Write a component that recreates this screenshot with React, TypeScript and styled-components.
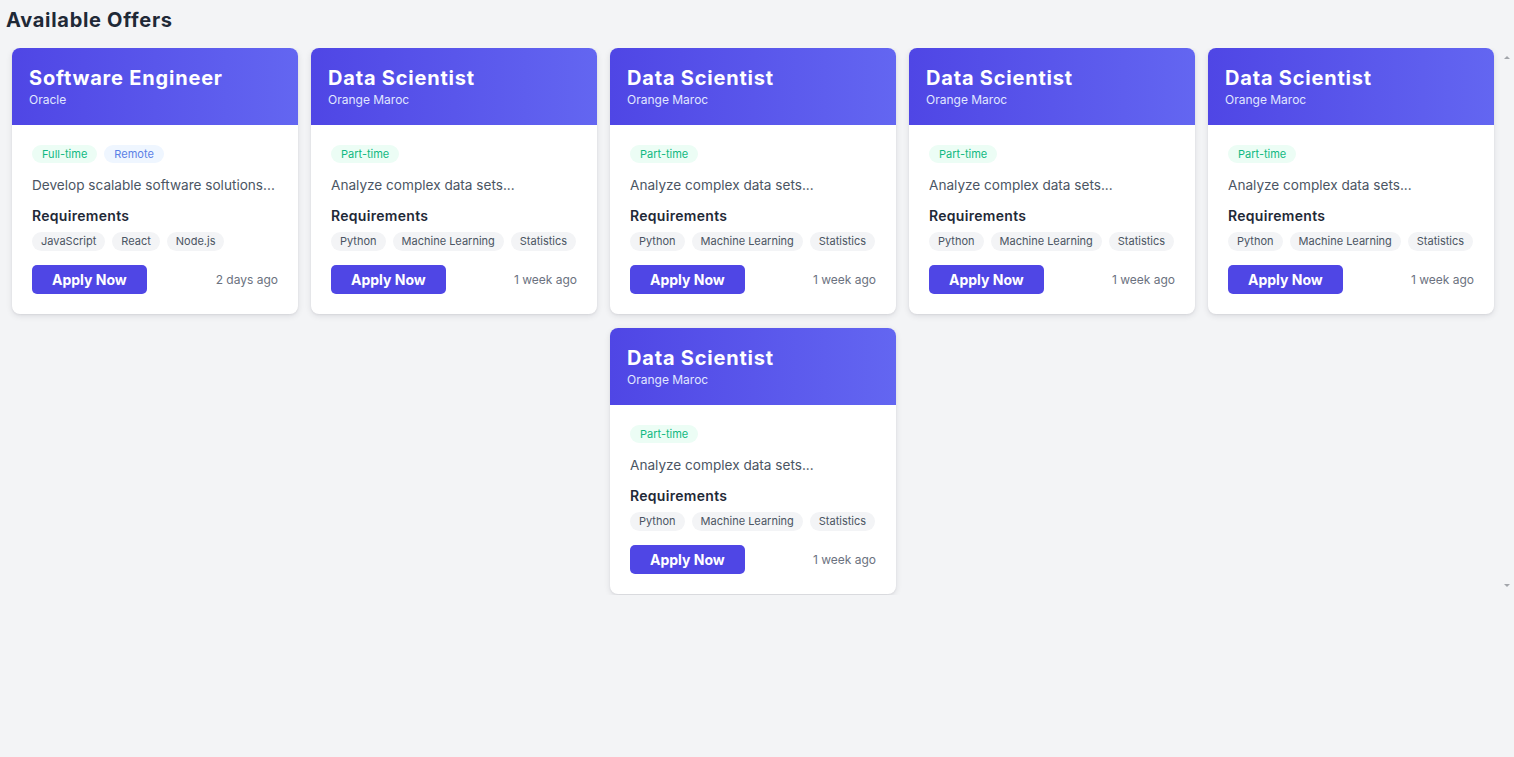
import React from 'react';
import styled, { createGlobalStyle } from 'styled-components';

const GlobalStyle = createGlobalStyle`
  html, body {
    margin: 0;
    padding: 0;
    background: #f3f4f6;
    font-family: 'Inter', 'Noto Sans', sans-serif;
  }
  * {
    box-sizing: border-box;
  }
`;

type Offer = {
  id: number;
  title: string;
  company: string;
  types: { label: string; tone: 'green' | 'blue' }[];
  description: string;
  skills: string[];
  posted: string;
};

const offers: Offer[] = [
  {
    id: 1,
    title: 'Software Engineer',
    company: 'Oracle',
    types: [
      { label: 'Full-time', tone: 'green' },
      { label: 'Remote', tone: 'blue' },
    ],
    description: 'Develop scalable software solutions...',
    skills: ['JavaScript', 'React', 'Node.js'],
    posted: '2 days ago',
  },
  ...[2, 3, 4, 5, 6].map((id) => ({
    id,
    title: 'Data Scientist',
    company: 'Orange Maroc',
    types: [{ label: 'Part-time', tone: 'green' as const }],
    description: 'Analyze complex data sets...',
    skills: ['Python', 'Machine Learning', 'Statistics'],
    posted: '1 week ago',
  })),
];

const Page = styled.div`
  padding: 6px 0 0 6px;
  height: 757px;
`;

const PageTitle = styled.h1`
  margin: 0 0 14px;
  font-size: 20px;
  line-height: 28px;
  font-weight: 700;
  color: #1f2937;
  letter-spacing: 0.7px;
`;

const Scroller = styled.div`
  position: relative;
  height: 547px;
  overflow-y: auto;
  padding-right: 14px;
`;

const ScrollArrow = styled.span<{ $down?: boolean }>`
  position: absolute;
  right: 4px;
  ${({ $down }) => ($down ? 'bottom: 8px;' : 'top: 8px;')}
  width: 0;
  height: 0;
  border-left: 3px solid transparent;
  border-right: 3px solid transparent;
  ${({ $down }) => ($down ? 'border-top: 3px solid #a3a6ab;' : 'border-bottom: 3px solid #a3a6ab;')}
`;

const Grid = styled.div`
  display: flex;
  flex-wrap: wrap;
  justify-content: center;
  gap: 14px 13px;
  padding-bottom: 12px;
`;

const Card = styled.div`
  width: 286px;
  background: #ffffff;
  border-radius: 8px;
  overflow: hidden;
  box-shadow: 0 2px 6px rgba(17, 24, 39, 0.1), 0 1px 2px rgba(17, 24, 39, 0.06);
`;

const CardHeader = styled.div`
  height: 77px;
  padding: 16px 17px;
  background: linear-gradient(90deg, #4f46e5 0%, #6366f1 100%);
  color: #ffffff;
`;

const JobTitle = styled.h2`
  margin: 0;
  font-size: 20px;
  line-height: 28px;
  font-weight: 700;
  letter-spacing: 0.8px;
  white-space: nowrap;
`;

const Company = styled.div`
  font-size: 12px;
  line-height: 16px;
  color: #e0e7ff;
`;

const CardBody = styled.div`
  padding: 20px;
`;

const TagRow = styled.div`
  display: flex;
  gap: 7px;
  margin-bottom: 12px;
`;

const Tag = styled.span<{ $tone: 'green' | 'blue' }>`
  display: inline-block;
  padding: 2px 10px;
  border-radius: 999px;
  font-size: 11px;
  line-height: 14px;
  white-space: nowrap;
  background: ${({ $tone }) => ($tone === 'green' ? '#ecfdf5' : '#eff6ff')};
  color: ${({ $tone }) => ($tone === 'green' ? '#10b981' : '#5b7fe6')};
`;

const Description = styled.p`
  margin: 0 0 11px;
  font-size: 13.6px;
  line-height: 20px;
  color: #4b5563;
  white-space: nowrap;
  overflow: hidden;
`;

const SectionLabel = styled.h3`
  margin: 0 0 6px;
  font-size: 14px;
  line-height: 20px;
  font-weight: 600;
  color: #1f2937;
  letter-spacing: 0.3px;
`;

const SkillRow = styled.div`
  display: flex;
  gap: 7px;
  margin-bottom: 14px;
`;

const Skill = styled.span`
  display: inline-block;
  padding: 3px 9px;
  border-radius: 999px;
  font-size: 11px;
  line-height: 13px;
  white-space: nowrap;
  background: #f3f4f6;
  color: #4b5563;
`;

const Footer = styled.div`
  display: flex;
  align-items: center;
  justify-content: space-between;
`;

const ApplyButton = styled.button`
  height: 29px;
  padding: 0 20px;
  border: none;
  border-radius: 5px;
  background: #4f46e5;
  color: #ffffff;
  font-family: inherit;
  font-size: 14px;
  font-weight: 700;
  cursor: pointer;
`;

const Posted = styled.span`
  font-size: 12px;
  color: #6b7280;
`;

const OfferCard: React.FC<{ offer: Offer }> = ({ offer }) => (
  <Card>
    <CardHeader>
      <JobTitle>{offer.title}</JobTitle>
      <Company>{offer.company}</Company>
    </CardHeader>
    <CardBody>
      <TagRow>
        {offer.types.map((t) => (
          <Tag key={t.label} $tone={t.tone}>
            {t.label}
          </Tag>
        ))}
      </TagRow>
      <Description>{offer.description}</Description>
      <SectionLabel>Requirements</SectionLabel>
      <SkillRow>
        {offer.skills.map((s) => (
          <Skill key={s}>{s}</Skill>
        ))}
      </SkillRow>
      <Footer>
        <ApplyButton>Apply Now</ApplyButton>
        <Posted>{offer.posted}</Posted>
      </Footer>
    </CardBody>
  </Card>
);

const App: React.FC = () => (
  <>
    <GlobalStyle />
    <Page>
      <PageTitle>Available Offers</PageTitle>
      <Scroller>
        <ScrollArrow />
        <ScrollArrow $down />
        <Grid>
          {offers.map((o) => (
            <OfferCard key={o.id} offer={o} />
          ))}
        </Grid>
      </Scroller>
    </Page>
  </>
);

export default App;
